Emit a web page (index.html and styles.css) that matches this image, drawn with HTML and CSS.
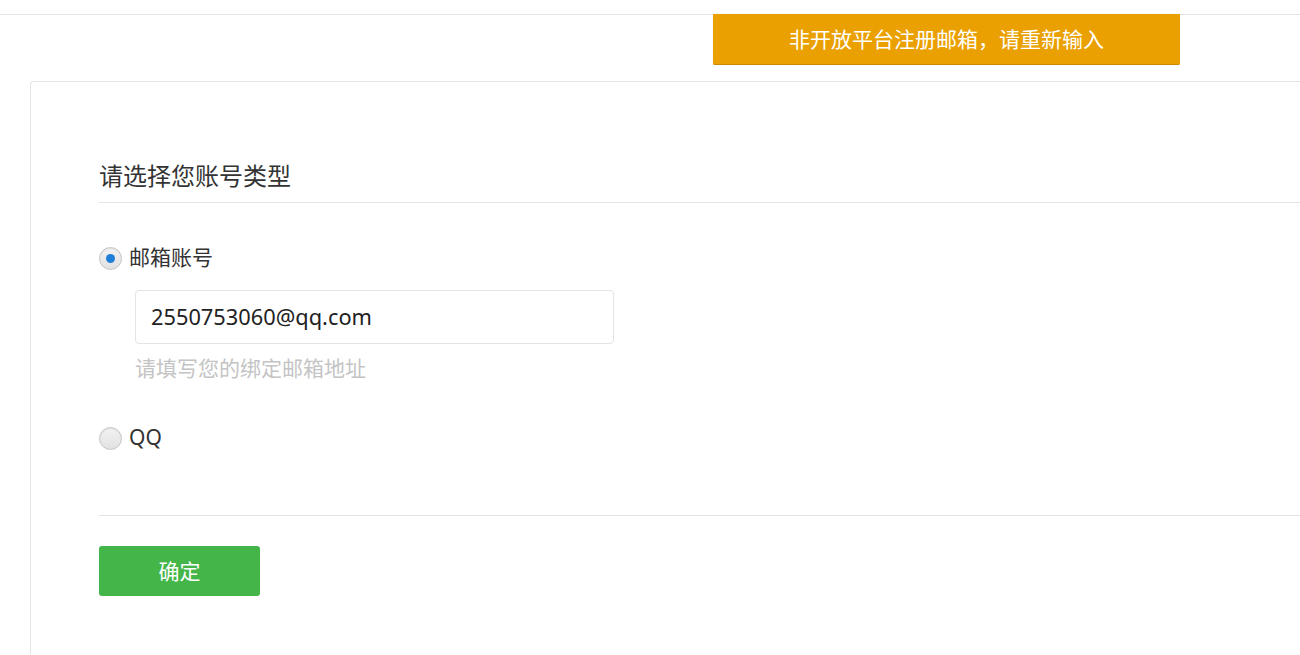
FILE: index.html
```html
<!DOCTYPE html>
<html lang="zh-CN">
<head>
    <meta charset="UTF-8">
    <meta name="viewport" content="width=device-width, initial-scale=1.0">
    <title>选择账号类型</title>
    <link rel="stylesheet" href="styles.css">
</head>
<body>
    <div class="topbar"></div>
    <div class="toast">非开放平台注册邮箱，请重新输入</div>

    <div class="panel">
        <h2 class="panel-title">请选择您账号类型</h2>

        <div class="option">
            <label class="radio-row">
                <input type="radio" name="type" checked>
                <span class="radio-mark"></span>
                <span class="radio-text">邮箱账号</span>
            </label>
            <div class="option-body">
                <input type="text" class="text-input" value="2550753060@qq.com">
                <p class="hint">请填写您的绑定邮箱地址</p>
            </div>
        </div>

        <div class="option option-qq">
            <label class="radio-row">
                <input type="radio" name="type">
                <span class="radio-mark"></span>
                <span class="radio-text">QQ</span>
            </label>
        </div>

        <div class="panel-footer">
            <button type="button" class="btn-primary">确定</button>
        </div>
    </div>
</body>
</html>
```

FILE: styles.css
```css
body {
    margin: 0;
    font-family: "Noto Sans", "Noto Sans CJK SC", sans-serif;
    color: #333;
    background-color: #fff;
    overflow: hidden;
}

.topbar {
    height: 14px;
    border-bottom: 1px solid #e4e4e4;
}

.toast {
    position: absolute;
    top: 14px;
    left: 713px;
    width: 467px;
    height: 50px;
    line-height: 50px;
    border-bottom: 1px solid #c98a00;
    border-radius: 0 0 2px 2px;
    background-color: #eaa000;
    color: #fff;
    font-size: 21px;
    text-align: center;
    box-shadow: 0 0 1px rgba(0, 0, 0, 0.2);
}

.panel {
    margin: 66px 0 0 30px;
    border: 1px solid #e4e4e4;
    border-right: none;
    border-bottom: none;
    border-radius: 4px 0 0 0;
    padding: 80px 0 58px 68px;
}

.panel-title {
    margin: 0;
    font-size: 24px;
    font-weight: normal;
    line-height: 28px;
    padding-bottom: 12px;
    border-bottom: 1px solid #e4e4e4;
    color: #333;
}

.option {
    margin-top: 43px;
}

.option-qq {
    margin-top: 46px;
}

.radio-row {
    display: flex;
    align-items: center;
    height: 24px;
    cursor: pointer;
}

.radio-row input {
    display: none;
}

.radio-mark {
    width: 21px;
    height: 21px;
    border-radius: 50%;
    border: 1px solid #c6c6c6;
    background: linear-gradient(#f2f2f2, #e2e2e2);
    box-shadow: inset 0 1px 1px rgba(0, 0, 0, 0.08);
    display: flex;
    align-items: center;
    justify-content: center;
    margin-right: 7px;
}

.radio-row input:checked + .radio-mark::after {
    content: "";
    width: 9px;
    height: 9px;
    border-radius: 50%;
    background-color: #1f7fd8;
}

.radio-text {
    font-size: 21px;
    line-height: 24px;
    margin-top: -3px;
    color: #333;
}

.option-body {
    padding-left: 36px;
    margin-top: 20px;
}

.text-input {
    display: block;
    width: 479px;
    height: 54px;
    box-sizing: border-box;
    border: 1px solid #e4e4e4;
    border-radius: 4px;
    padding: 0 15px 2px;
    font-family: "Noto Sans", "Noto Sans CJK SC", sans-serif;
    font-size: 21.8px;
    color: #222;
    outline: none;
}

.hint {
    margin: 12px 0 0;
    font-size: 21px;
    line-height: 24px;
    color: #c4c4c4;
}

.panel-footer {
    margin-top: 65px;
    border-top: 1px solid #e4e4e4;
    padding-top: 30px;
}

.btn-primary {
    display: block;
    width: 161px;
    height: 50px;
    padding: 0 0 3px;
    border: none;
    border-radius: 3px;
    background-color: #44b549;
    color: #fff;
    font-family: "Noto Sans CJK SC", sans-serif;
    font-size: 21px;
    cursor: pointer;
}
```
